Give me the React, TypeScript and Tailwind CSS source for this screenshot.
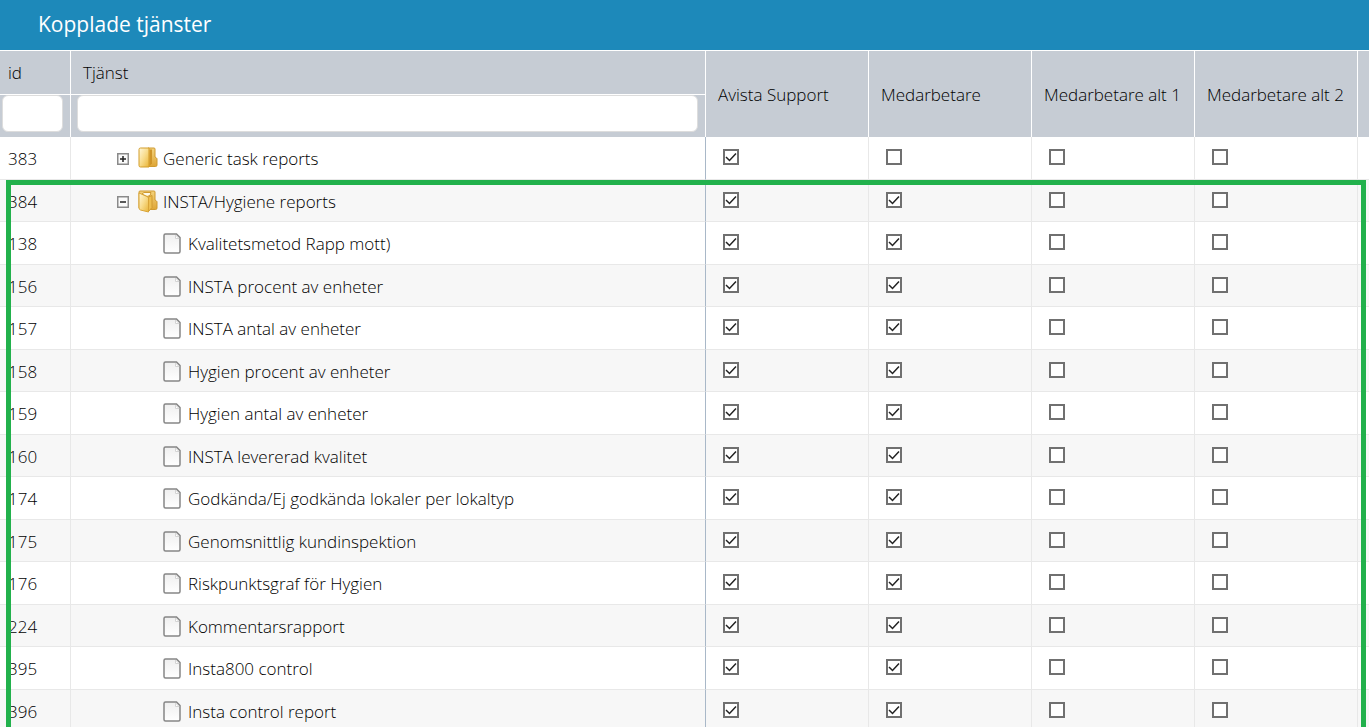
import clsx from "clsx";

type Service = {
  id: number;
  name: string;
  kind: "closed" | "open" | "report";
  access: boolean[];
};

const ROLES = [
  "Avista Support",
  "Medarbetare",
  "Medarbetare alt 1",
  "Medarbetare alt 2",
];

const report = (id: number, name: string): Service => ({
  id,
  name,
  kind: "report",
  access: [true, true, false, false],
});

const SERVICES: Service[] = [
  {
    id: 383,
    name: "Generic task reports",
    kind: "closed",
    access: [true, false, false, false],
  },
  {
    id: 384,
    name: "INSTA/Hygiene reports",
    kind: "open",
    access: [true, true, false, false],
  },
  report(138, "Kvalitetsmetod Rapp mott)"),
  report(156, "INSTA procent av enheter"),
  report(157, "INSTA antal av enheter"),
  report(158, "Hygien procent av enheter"),
  report(159, "Hygien antal av enheter"),
  report(160, "INSTA levererad kvalitet"),
  report(174, "Godkända/Ej godkända lokaler per lokaltyp"),
  report(175, "Genomsnittlig kundinspektion"),
  report(176, "Riskpunktsgraf för Hygien"),
  report(224, "Kommentarsrapport"),
  report(395, "Insta800 control"),
  report(396, "Insta control report"),
];

const FolderIcon = ({ open }: { open: boolean }) => (
  <svg className="h-6 w-5 shrink-0" viewBox="0 0 20 24" aria-hidden="true">
    <defs>
      <linearGradient id="folder" x1="0" y1="0" x2="1" y2="1">
        <stop offset="0" stopColor="#fff8dc" />
        <stop offset="0.5" stopColor="#f8dc8c" />
        <stop offset="1" stopColor="#e9b437" />
      </linearGradient>
      <linearGradient id="folderBack" x1="0" y1="0" x2="0" y2="1">
        <stop offset="0" stopColor="#f3d27c" />
        <stop offset="1" stopColor="#dfa636" />
      </linearGradient>
    </defs>
    {open ? (
      <>
        <path
          d="M2 1h14q1 0 1 1v8l1.500 1q.5.5.5 1v6q0 1.500-1.500 1.500H8L1 18V2q0-1 1-1z"
          fill="url(#folderBack)"
          stroke="#cf9a30"
        />
        <path d="M4 4l2-1.500h7l-1 3-3 1z" fill="#fffbea" stroke="#cf9a30" />
        <path d="M10.500 7L14 5.500v12l-3.500 4z" fill="#eebf50" stroke="#cf9a30" />
        <path
          d="M1 3l8 3.500q1.500.5 1.500 1.500v14L2.500 20Q1 19.500 1 18z"
          fill="url(#folder)"
          stroke="#d8a437"
        />
      </>
    ) : (
      <>
        <path
          d="M10 1h6q1 0 1 1v8l1.500 1q.5.5.5 1v6q0 1.500-1.500 1.500H10z"
          fill="url(#folderBack)"
          stroke="#cf9a30"
        />
        <path
          d="M1 2.500Q1 1 2.500 1H11v19H2.500Q1 20 1 18.500z"
          fill="url(#folder)"
          stroke="#d39d2b"
        />
        <path d="M11.500 2.500H14v14L11.500 19z" fill="#cf9528" />
      </>
    )}
  </svg>
);

const ReportIcon = () => (
  <svg className="h-[22px] w-[18px] shrink-0" viewBox="0 0 18 22" aria-hidden="true">
    <defs>
      <linearGradient id="paper" x1="0" y1="0" x2="0" y2="1">
        <stop offset="0" stopColor="#efefef" />
        <stop offset="1" stopColor="#ffffff" />
      </linearGradient>
    </defs>
    <path
      d="M2.500 1H13.500l3.500 3.500v14q0 1.500-1.500 1.500h-13Q1 20 1 18.500v-16Q1 1 2.500 1z"
      fill="url(#paper)"
      stroke="#868686"
      strokeWidth="1.500"
    />
    <path d="M12.500 2v3.500H16z" fill="#ffffff" stroke="#d4d4d4" />
  </svg>
);

const Expander = ({ open, name }: { open: boolean; name: string }) => (
  <button
    type="button"
    aria-expanded={open}
    aria-label={name}
    className="mr-[9px] h-3 w-3 shrink-0"
  >
    <svg viewBox="0 0 12 12" className="h-3 w-3" aria-hidden="true">
      <rect x="0.75" y="0.75" width="10.500" height="10.500" fill="#fafafa" stroke="#8a8a8a" strokeWidth="1.500" />
      <path d={open ? "M3 6h6" : "M3 6h6M6 3v6"} stroke="#222222" strokeWidth="1.500" />
    </svg>
  </button>
);

const AccessBox = ({ checked, label }: { checked: boolean; label: string }) => (
  <label className="relative block h-4 w-4">
    <input
      type="checkbox"
      defaultChecked={checked}
      aria-label={label}
      className="peer block h-4 w-4 appearance-none border-2 border-[#707070] bg-white"
    />
    <svg
      viewBox="0 0 16 16"
      className="pointer-events-none absolute inset-0 hidden h-4 w-4 peer-checked:block"
      aria-hidden="true"
    >
      <path d="M3 8l3.500 3.500L13 4.500" fill="none" stroke="#222222" strokeWidth="1.500" />
    </svg>
  </label>
);

const FilterInput = ({ label }: { label: string }) => (
  <input
    type="text"
    aria-label={label}
    className="block h-[37px] w-full rounded-md border border-[#dddddd] bg-white px-2"
  />
);

const ServiceRow = ({ service, striped }: { service: Service; striped: boolean }) => {
  const cell = "border-r border-b border-[#e8e8e8] p-0";

  return (
    <tr className={striped ? "h-[42px] bg-[#f7f7f7]" : "h-[43px] bg-white"}>
      <td className={clsx(cell, "pt-[2px] pl-2")}>{service.id}</td>
      <td className="border-r border-b border-r-[#a9b8c8] border-b-[#e8e8e8] p-0 pt-[2px]">
        {service.kind === "report" ? (
          <div className="flex items-center gap-[7px] pl-[92px]">
            <ReportIcon />
            {service.name}
          </div>
        ) : (
          <div className="flex items-center pl-[46px]">
            <Expander open={service.kind === "open"} name={service.name} />
            <FolderIcon open={service.kind === "open"} />
            <span className="pl-[5px]">{service.name}</span>
          </div>
        )}
      </td>
      {service.access.map((checked, i) => (
        <td key={ROLES[i]} className={clsx(cell, "pt-3 pl-[17px] align-top")}>
          <AccessBox checked={checked} label={`${service.name}, ${ROLES[i]}`} />
        </td>
      ))}
      <td className="border-b border-[#e8e8e8] p-0" />
    </tr>
  );
};

export default function App() {
  return (
    <div className="relative h-screen overflow-hidden bg-white font-['Open_Sans','Noto_Sans',sans-serif] text-[17px] leading-6 font-[350] text-black">
      <header className="flex h-[50px] items-center bg-[#1d89ba] pl-[38px]">
        <h1 className="pb-[2px] text-[21px] leading-7 font-normal text-white">
          Kopplade tjänster
        </h1>
      </header>
      <table className="w-full table-fixed border-separate border-spacing-0 text-left">
        <colgroup>
          <col className="w-[71px]" />
          <col />
          {ROLES.map((role) => (
            <col key={role} className="w-[163px]" />
          ))}
          <col className="w-[11px]" />
        </colgroup>
        <thead className="bg-[#c6ccd4]">
          <tr className="h-11">
            <th className="border-t border-r border-white p-0 pl-2 font-[350]">id</th>
            <th className="border-t border-r border-white p-0 pl-3 font-[350]">Tjänst</th>
            {ROLES.map((role) => (
              <th
                key={role}
                rowSpan={2}
                className="border-t border-r border-white p-0 pt-[2px] pl-3 font-[350] whitespace-nowrap"
              >
                {role}
              </th>
            ))}
            <th rowSpan={2} className="border-t border-white p-0" />
          </tr>
          <tr className="h-[43px]">
            <td className="border-t border-r border-white p-0 pr-[7px] pb-[5px] pl-[2px]">
              <FilterInput label="id" />
            </td>
            <td className="border-t border-r border-white p-0 pr-[7px] pb-[5px] pl-[6px]">
              <FilterInput label="Tjänst" />
            </td>
          </tr>
        </thead>
        <tbody>
          {SERVICES.map((service, i) => (
            <ServiceRow key={service.id} service={service} striped={i % 2 === 1} />
          ))}
        </tbody>
      </table>
      {/* frame around the INSTA/Hygiene group, runs on below the fold */}
      <div className="pointer-events-none absolute top-[180px] right-[3px] -bottom-2 left-[6px] border-5 border-[#22b14c]" />
    </div>
  );
}
